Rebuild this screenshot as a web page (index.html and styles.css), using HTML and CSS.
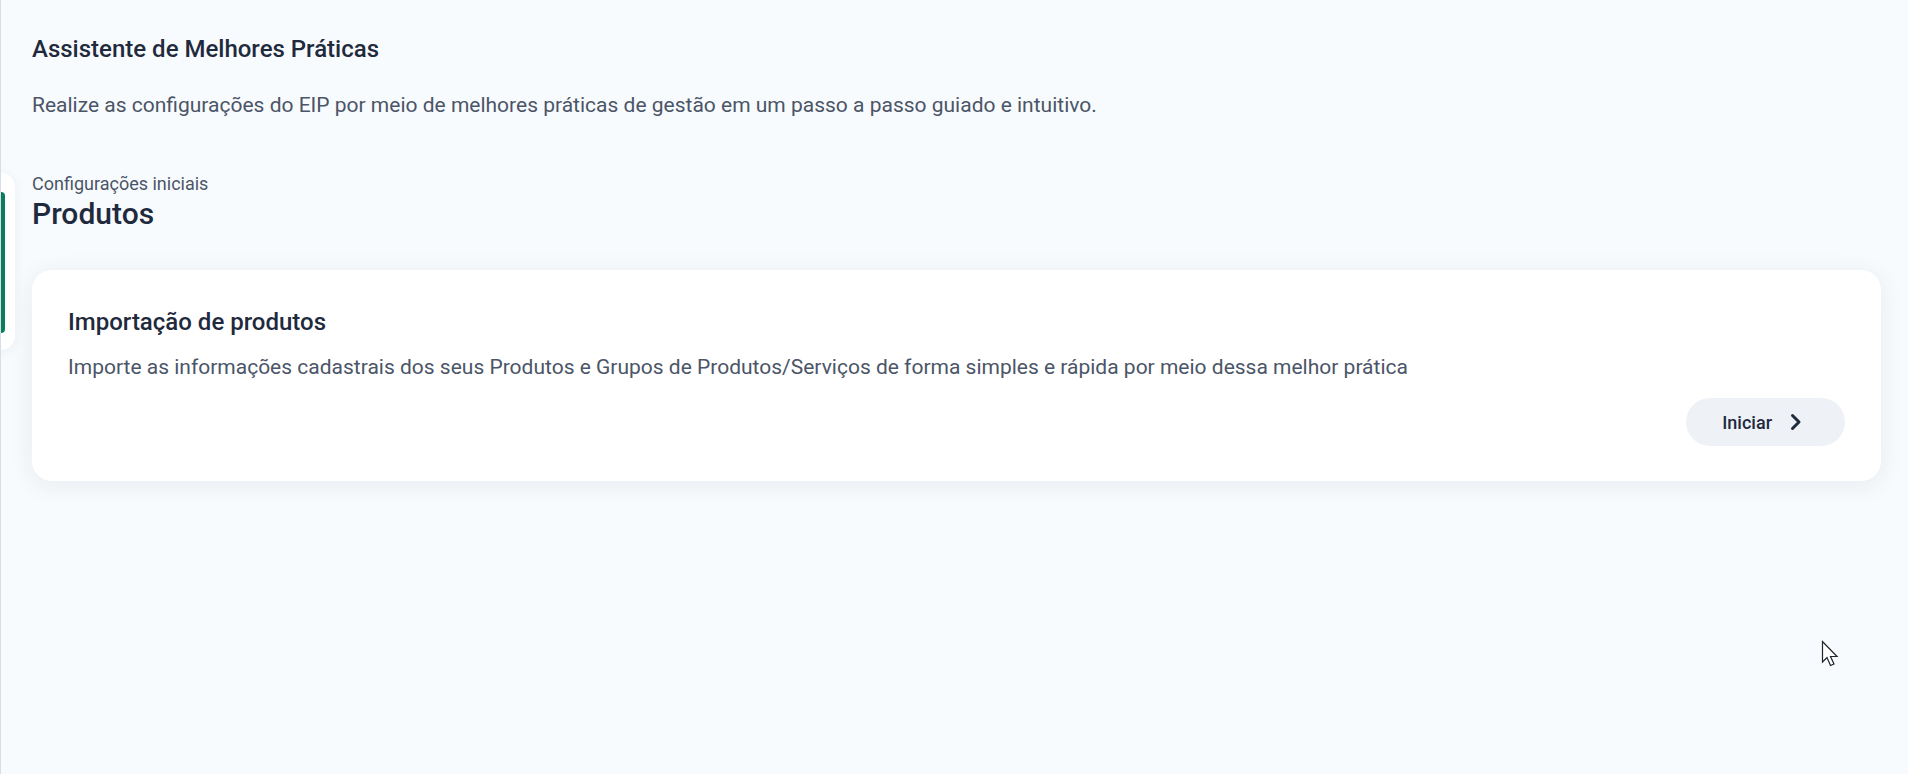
FILE: index.html
```html
<!DOCTYPE html>
<html lang="pt-BR">
<head>
<meta charset="utf-8">
<title>Assistente de Melhores Práticas</title>
<link rel="stylesheet" href="styles.css">
</head>
<body>
<div class="drawer-stub"><span class="drawer-bar"></span></div>
<main class="page">
  <header class="page-head">
    <h1 class="page-title">Assistente de Melhores Práticas</h1>
    <p class="page-sub">Realize as configurações do EIP por meio de melhores práticas de gestão em um passo a passo guiado e intuitivo.</p>
  </header>
  <section class="section">
    <div class="section-kicker">Configurações iniciais</div>
    <h2 class="section-title">Produtos</h2>
    <article class="card">
      <h3 class="card-title">Importação de produtos</h3>
      <p class="card-desc">Importe as informações cadastrais dos seus Produtos e Grupos de Produtos/Serviços de forma simples e rápida por meio dessa melhor prática</p>
      <div class="card-actions">
        <button class="btn">Iniciar
          <svg class="btn-icon" viewBox="0 0 12 18" width="12" height="18"><path d="M2.5 2.5 L9 9 L2.5 15.5" fill="none" stroke="currentColor" stroke-width="3" stroke-linecap="round" stroke-linejoin="round"/></svg>
        </button>
      </div>
    </article>
  </section>
</main>
<svg class="cursor" width="20" height="30" viewBox="0 0 20 30"><path d="M1.5 1.5 L1.5 22 L6 17.5 L9.5 25.5 L13 24 L9.5 16.5 L16 16.5 Z" fill="#ffffff" stroke="#1f2430" stroke-width="1.2" stroke-linejoin="miter"/></svg>
</body>
</html>
```
FILE: styles.css
```css
html, body {
  margin: 0;
  padding: 0;
  height: 100%;
}
body {
  background: #f8fbfd;
  font-family: Roboto, "Liberation Sans", sans-serif;
  color: #1f2a3d;
  border-left: 1px solid #d9dee6;
  box-sizing: border-box;
  position: relative;
  overflow: hidden;
}
.page {
  padding: 34px 27px 0 31px;
}
.page-title {
  margin: 0;
  font-size: 24px;
  line-height: 30px;
  font-weight: 500;
  color: #1f2a3d;
}
.page-sub {
  margin: 27px 0 0;
  font-size: 21px;
  line-height: 28px;
  color: #4b5567;
}
.section {
  margin-top: 54px;
}
.section-kicker {
  font-size: 18px;
  line-height: 22px;
  color: #4b5567;
}
.section-title {
  margin: 1px 0 0;
  font-size: 30px;
  line-height: 36px;
  font-weight: 500;
  color: #1f2a3d;
}
.card {
  margin-top: 38px;
  background: #ffffff;
  border-radius: 20px;
  box-shadow: 0 4px 24px rgba(30, 41, 80, 0.08);
  padding: 37px 36px 35px 36px;
}
.card-title {
  margin: 0;
  font-size: 24px;
  line-height: 30px;
  font-weight: 500;
  color: #1f2a3d;
}
.card-desc {
  margin: 16px 0 0;
  font-size: 21px;
  line-height: 28px;
  color: #4b5567;
}
.card-actions {
  display: flex;
  justify-content: flex-end;
  margin-top: 17px;
}
.btn {
  display: inline-flex;
  align-items: center;
  gap: 18px;
  height: 48px;
  padding: 0 43px 0 36px;
  border: 0;
  border-radius: 24px;
  background: #eef2f7;
  font-family: Roboto, "Liberation Sans", sans-serif;
  font-size: 18px;
  font-weight: 500;
  color: #1f2a3d;
}
.btn-icon {
  color: #1f2a3d;
}
.drawer-stub {
  position: absolute;
  left: -20px;
  top: 173px;
  width: 34px;
  height: 177px;
  background: #ffffff;
  border-radius: 14px;
  box-shadow: 0 2px 12px rgba(30, 41, 80, 0.06);
}
.drawer-bar {
  position: absolute;
  left: 19px;
  top: 19px;
  width: 5px;
  height: 141px;
  background: #0a7d5a;
  border-radius: 0 4px 4px 0;
}
.cursor {
  position: absolute;
  left: 1820px;
  top: 640px;
}
```
